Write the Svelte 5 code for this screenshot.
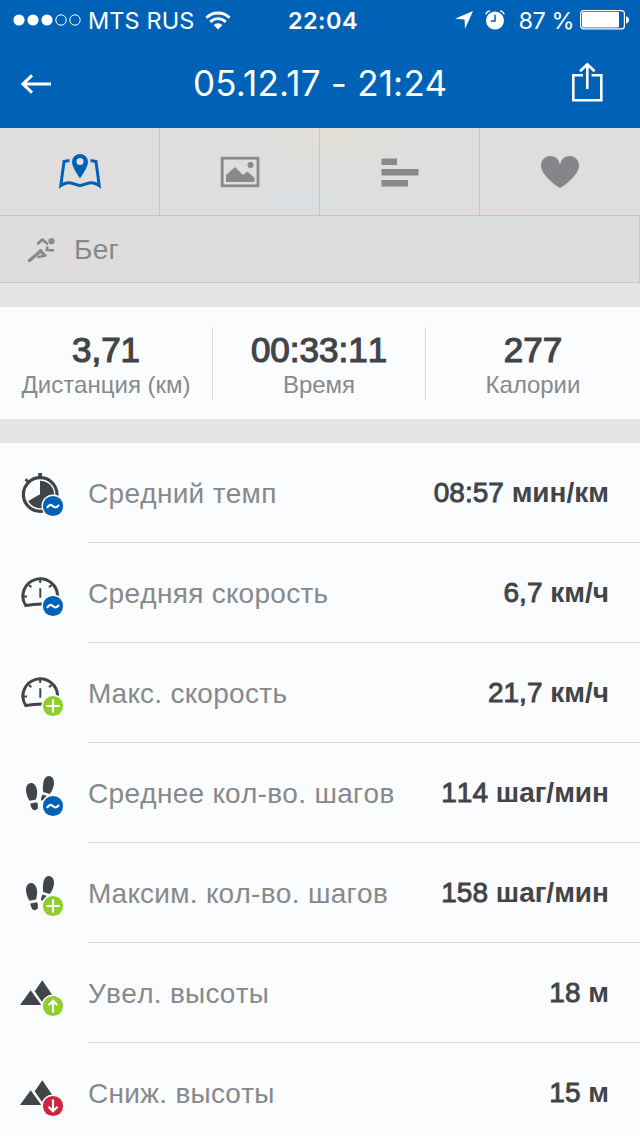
<script lang="ts">
  type Row = {
    icon: "watch" | "gauge" | "steps" | "hills";
    badge: "avg" | "plus" | "up" | "down";
    label: string;
    value: string;
    unit: string;
  };

  const rows: Row[] = [
    { icon: "watch", badge: "avg", label: "Средний темп", value: "08:57", unit: "мин/км" },
    { icon: "gauge", badge: "avg", label: "Средняя скорость", value: "6,7", unit: "км/ч" },
    { icon: "gauge", badge: "plus", label: "Макс. скорость", value: "21,7", unit: "км/ч" },
    { icon: "steps", badge: "avg", label: "Среднее кол-во. шагов", value: "114", unit: "шаг/мин" },
    { icon: "steps", badge: "plus", label: "Максим. кол-во. шагов", value: "158", unit: "шаг/мин" },
    { icon: "hills", badge: "up", label: "Увел. высоты", value: "18", unit: "м" },
    { icon: "hills", badge: "down", label: "Сниж. высоты", value: "15", unit: "м" },
  ];

  const stats = [
    { value: "3,71", label: "Дистанция (км)" },
    { value: "00:33:11", label: "Время" },
    { value: "277", label: "Калории" },
  ];
</script>

<main>
  <header>
    <div class="status">
      <div class="carrier">
        <svg width="68" height="12" viewBox="0 0 68 12">
          <g fill="#fff">
            <circle cx="6" cy="6" r="5.6" />
            <circle cx="20" cy="6" r="5.6" />
            <circle cx="34" cy="6" r="5.6" />
          </g>
          <g fill="none" stroke="#fff">
            <circle cx="48" cy="6" r="5.2" />
            <circle cx="62" cy="6" r="5.2" />
          </g>
        </svg>
        <span class="operator">MTS RUS</span>
        <svg class="wifi" width="26" height="19" viewBox="0 0 26 19">
          <g fill="none" stroke="#fff" stroke-width="2.8">
            <path d="M1.4 6.8a16.4 16.4 0 0 1 23.2 0" />
            <path d="M5.3 10.9a10.9 10.9 0 0 1 15.4 0" />
          </g>
          <path fill="#fff" d="M8.6 14a6.2 6.2 0 0 1 8.8 0L13 18.6z" />
        </svg>
      </div>
      <span class="clock">22:04</span>
      <div class="power">
        <svg width="18" height="18" viewBox="0 0 18 18">
          <path fill="#fff" d="M18 0 10 18 9.6 8.6 0 7.8z" />
        </svg>
        <svg class="alarm" width="20" height="20" viewBox="0 0 20 20">
          <circle cx="10" cy="10.6" r="9" fill="#fff" />
          <path d="M10 4.8v6.2H5.8" fill="none" stroke="#0062b7" stroke-width="1.5" />
          <path d="M.8 4.4Q1.6 1.3 5 .8M19.2 4.4Q18.4 1.3 15 .8" fill="none" stroke="#fff" stroke-width="1.3" />
        </svg>
        <span class="percent">87 %</span>
        <svg class="battery" width="49" height="20" viewBox="0 0 49 20">
          <rect x=".6" y=".6" width="43.8" height="18.3" rx="3" fill="none" stroke="#fff" stroke-width="1.2" />
          <rect x="2" y="2" width="37" height="15.5" rx="1" fill="#fff" />
          <path fill="#fff" d="M46 6.2q3 .6 3 3.6t-3 3.6z" />
        </svg>
      </div>
    </div>
    <div class="nav">
      <svg width="31" height="20" viewBox="0 0 31 20">
        <path d="M30 10H2M11 1.3 2 10l9 8.7" fill="none" stroke="#fff" stroke-width="3" />
      </svg>
      <h1>05.12.17 - 21:24</h1>
      <svg class="share" width="32" height="40" viewBox="0 0 32 40">
        <g fill="none" stroke="#fff" stroke-width="2.6">
          <path d="M12 13.3H2.3v25h28v-25H20.600" />
          <path d="M16.300 27V2.500M9 9.300l7.300-7 7.300 7" />
        </g>
      </svg>
    </div>
  </header>

  <div class="tabs">
    <div class="tab">
      <svg class="map" width="44" height="38" viewBox="0 0 44 38">
        <path
          d="M11.5 7.5 6 8.500 2.800 32.500Q8 28.800 13 30l9 2.700 9-2.700q5-1.200 10.200 2.500L38 8.500l-5.500-1"
          fill="none" stroke="#0062b7" stroke-width="3"
        />
        <path
          fill="#0062b7" fill-rule="evenodd"
          d="M22 25.500Q14 14 14 9a8 8 0 0 1 16 0q0 5-8 16.500zM22 5a3.500 3.500 0 1 0 0 7 3.500 3.500 0 0 0 0-7z"
        />
      </svg>
    </div>
    <div class="tab">
      <svg width="40" height="32" viewBox="0 0 40 32">
        <rect x="2.2" y="2.2" width="35.8" height="27.6" fill="none" stroke="#87898b" stroke-width="2.8" />
        <circle cx="30.5" cy="8.9" r="3" fill="#87898b" />
        <path fill="#87898b" d="M6 26v-7l9-8 8 8 4.5-3.5 7 6.5v4z" />
      </svg>
    </div>
    <div class="tab">
      <svg width="38" height="30" viewBox="0 0 38 30">
        <path fill="#87898b" d="M.5 1.500H16V8H.5zM.5 12h37v6.500H.5zM.5 23H27v6.500H.5z" />
      </svg>
    </div>
    <div class="tab">
      <svg width="40" height="34" viewBox="0 0 40 34">
        <path
          fill="#84868a"
          d="M20 33Q14 30 7 22.500 1 16 1 10.500C1 5 5 1 10.500 1 15.500 1 19 4.500 20 9.500 21 4.500 24.500 1 29.500 1 35 1 39 5 39 10.500q0 5.500-6 12Q26 30 20 33z"
        />
      </svg>
    </div>
  </div>

  <div class="sport">
    <svg width="28" height="26" viewBox="0 0 28 26">
      <circle cx="24.5" cy="4.2" r="3.1" fill="#87898b" />
      <g fill="none" stroke="#87898b" stroke-width="2.7" stroke-linecap="round" stroke-linejoin="round">
        <path d="M11 6.500 15.300 2.400 20 6.500" />
        <path d="M12.500 15 2.500 23.500" stroke-width="3.200" />
        <path d="m12.500 14.200 6 4.300-7 1.500" />
        <path d="m13.500 13.300 3 3.500" />
        <path d="m20.300 10.500-.6 2.500 6.300.3" />
      </g>
    </svg>
    <span>Бег</span>
  </div>

  <div class="stats">
    {#each stats as stat}
      <div class="stat">
        <strong>{stat.value}</strong>
        <span>{stat.label}</span>
      </div>
    {/each}
  </div>

  <ul>
    {#each rows as row}
      <li>
        <svg class="icon" width="46" height="50" viewBox="0 0 46 50">
          {#if row.icon === "watch"}
            <circle cx="20.2" cy="26.5" r="16.8" fill="none" stroke="#424548" stroke-width="3.2" />
            <path fill="#424548" d="M20 26.300V12.800A13.700 13.700 0 1 1 8.300 33z" />
            <path fill="#424548" d="M18.200 5H22v4.500h-3.800zM4.500 12.200l2-2 2.700 2.600-2 2z" />
          {:else if row.icon === "gauge"}
            <path
              d="M37.500 29A17.300 17.300 0 1 0 5.700 37.500Q13.500 36.200 22 36"
              fill="none" stroke="#424548" stroke-width="3"
            />
            <path
              d="M4 28.500h3M9 17l2.300 2.300M20.200 12v3M31.400 17l-2.300 2.300M20.300 20.300v9.500"
              fill="none" stroke="#424548" stroke-width="2"
            />
          {:else if row.icon === "steps"}
            <g fill="#424548">
              <path d="M10.500 15q4-.5 6 5 1.500 5-.5 11.500l-6.500 1.200Q6 27.500 6 21.500 6.200 15.800 10.500 15z" />
              <path d="m10.200 35.500 7-1.300q2.200 6.600-1.700 7.900-4 .8-5.300-6.600z" />
              <path d="M28.500 8.100q5.700.1 5.500 7.400-.4 6-4.500 10.600L23.200 24q-.9-4.700.1-9.300 1.400-6.400 5.200-6.600z" />
              <path d="m22.500 26.500 4 1.300-2 4.200-3.600.5q0-3 1.600-6z" />
            </g>
          {:else}
            <path fill="#424548" d="M10.700 22.300 21.300 37H0z" />
            <path fill="#424548" d="m22.300 12.300 12.200 18-12.800 3.200-7-10.200z" />
          {/if}
          <circle cx="33" cy="38" r="11.500" fill="#fbfcfe" />
          <g class="badge {row.badge}">
            <circle cx="33" cy="38" r="10.100" />
            {#if row.badge === "avg"}
              <path d="M27 40q2.400-4.600 5.400-2.200 3.400 3.400 6.600-1" />
            {:else if row.badge === "plus"}
              <path d="M26.500 38h13M33 31.500v13" />
            {:else if row.badge === "up"}
              <path d="M33 44.500V33M28.500 37.200l4.500-4.500 4.500 4.500" />
            {:else}
              <path d="M33 31.500V43M28.500 38.800l4.500 4.500 4.500-4.500" />
            {/if}
          </g>
        </svg>
        <div class="line">
          <span class="label">{row.label}</span>
          <span class="value">{row.value} <b>{row.unit}</b></span>
        </div>
      </li>
    {/each}
  </ul>
</main>

<style>
  :global(body) {
    overflow: hidden;
    background: #fbfcfe;
  }

  main {
    width: 640px;
    height: 1136px;
    overflow: hidden;
    background: #e3e5e7;
    font-family: "Liberation Sans", Arial, sans-serif;
    font-kerning: none;
    color: #424447;
  }

  svg {
    display: block;
    flex: none;
  }

  header {
    height: 128px;
    background: #0062b7;
    color: #fff;
    font-family: Inter, sans-serif;
    font-kerning: auto;
  }

  .status {
    display: grid;
    grid-template-columns: 1fr auto 1fr;
    align-items: center;
    height: 40px;
    padding: 0 11px 0 13px;
    font-size: 23.5px;
    white-space: nowrap;
  }

  .carrier,
  .power {
    display: flex;
    align-items: center;
  }

  .operator {
    margin-left: 7px;
    letter-spacing: 0.1px;
  }

  .wifi {
    margin-left: 11px;
  }

  .clock {
    padding-left: 4px;
    font-weight: 600;
    letter-spacing: 0.4px;
  }

  .power {
    justify-content: flex-end;
  }

  .alarm {
    margin-left: 12px;
  }

  .percent {
    margin-left: 13px;
    letter-spacing: -0.5px;
  }

  .battery {
    margin-left: 6px;
  }

  .nav {
    display: flex;
    align-items: center;
    height: 88px;
    padding: 0 37px 0 21px;
  }

  .share {
    margin: 0 0 4px auto;
  }

  h1 {
    margin: 0 0 2px 141px;
    font-size: 35px;
    font-weight: 400;
    letter-spacing: 0.2px;
  }

  .tabs {
    display: grid;
    grid-template-columns: repeat(4, 1fr);
    height: 88px;
    box-sizing: border-box;
    border-bottom: 1px solid #c4c7c8;
    background:
      radial-gradient(ellipse at 52% 10%, #e2e0d5 0, transparent 14%),
      radial-gradient(ellipse at 47% 85%, #dbdfe2 0, transparent 20%),
      #dfdedc;
  }

  .tab {
    display: flex;
    align-items: center;
    justify-content: center;
    border-right: 1px solid #c4c7c8;
  }

  .tab:last-child {
    border-right: none;
  }

  .sport {
    display: flex;
    align-items: center;
    gap: 19px;
    height: 67px;
    box-sizing: border-box;
    padding: 2px 0 0 27px;
    border-right: 1px solid #c4c7c8;
    border-bottom: 1px solid #c4c7c8;
    background: radial-gradient(ellipse at 77% 0, #d9dedb 0, transparent 25%), #dedddb;
    color: #87888a;
    font-size: 28px;
    letter-spacing: 0.3px;
  }

  .stats {
    display: grid;
    grid-template-columns: 213px 213px 214px;
    height: 112px;
    box-sizing: border-box;
    margin: 24px 0;
    padding: 20px 0;
    background: #fbfcfe;
  }

  .stat {
    display: flex;
    flex-direction: column;
    align-items: center;
    border-right: 1px solid #d7d9db;
  }

  .stat:last-child {
    border-right: none;
  }

  .stat strong {
    margin-top: 3px;
    font-size: 35px;
    font-weight: 400;
    line-height: 40px;
    -webkit-text-stroke: 1.2px #424447;
  }

  .stat span {
    font-size: 24px;
    line-height: 30px;
    color: #87898b;
  }

  ul {
    margin: 0;
    padding: 0;
    list-style: none;
    background: #fbfcfe;
  }

  li {
    display: flex;
    align-items: center;
    gap: 22px;
    height: 100px;
    padding-left: 20px;
  }

  .line {
    display: flex;
    flex: 1;
    align-items: center;
    justify-content: space-between;
    height: 100%;
    box-sizing: border-box;
    padding-right: 31px;
    border-bottom: 1px solid #d7d9db;
    font-size: 28px;
    white-space: nowrap;
  }

  .label {
    padding-top: 2px;
    color: #87898b;
    letter-spacing: 0.3px;
  }

  .value {
    -webkit-text-stroke: 0.9px #424447;
  }

  .value b {
    -webkit-text-stroke: 0;
  }

  .badge path {
    fill: none;
    stroke: #fff;
    stroke-width: 2.2;
  }

  .avg {
    fill: #0062b7;
  }

  .plus,
  .up {
    fill: #8fce2c;
  }

  .down {
    fill: #cf2340;
  }
</style>
